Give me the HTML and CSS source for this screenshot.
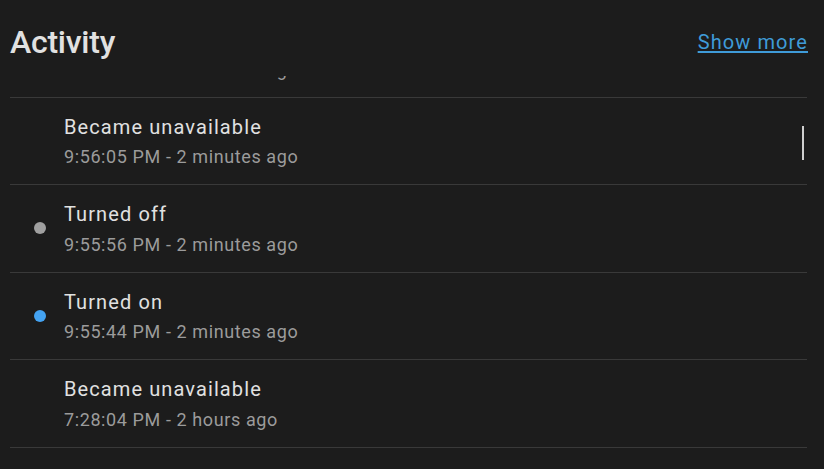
FILE: index.html
```html
<!DOCTYPE html>
<html lang="en">
<head>
<meta charset="utf-8">
<title>Activity</title>
<link rel="stylesheet" href="styles.css">
</head>
<body>
<div class="card">
  <div class="header">
    <h1 class="title">Activity</h1>
    <a class="more" href="#">Show more</a>
  </div>
  <div class="scroller">
    <ul class="list">
      <li class="entry">
        <span class="dot none"></span>
        <div class="text">
          <div class="primary">Turned off</div>
          <div class="secondary">9:56:17 PM - 2 minutes ago</div>
        </div>
      </li>
      <li class="entry">
        <span class="dot none"></span>
        <div class="text">
          <div class="primary">Became unavailable</div>
          <div class="secondary">9:56:05 PM - 2 minutes ago</div>
        </div>
      </li>
      <li class="entry">
        <span class="dot off"></span>
        <div class="text">
          <div class="primary">Turned off</div>
          <div class="secondary">9:55:56 PM - 2 minutes ago</div>
        </div>
      </li>
      <li class="entry">
        <span class="dot on"></span>
        <div class="text">
          <div class="primary">Turned on</div>
          <div class="secondary">9:55:44 PM - 2 minutes ago</div>
        </div>
      </li>
      <li class="entry">
        <span class="dot none"></span>
        <div class="text">
          <div class="primary">Became unavailable</div>
          <div class="secondary">7:28:04 PM - 2 hours ago</div>
        </div>
      </li>
    </ul>
    <div class="thumb"></div>
  </div>
</div>
</body>
</html>
```
FILE: styles.css
```css
html, body {
  margin: 0;
  padding: 0;
  height: 100%;
  background: #1c1c1c;
}
body {
  font-family: Roboto, "Noto Sans", sans-serif;
  color: #e1e1e1;
  overflow: hidden;
}
.card {
  height: 469px;
  display: flex;
  flex-direction: column;
  padding: 0 17px 0 10px;
  box-sizing: border-box;
}
.header {
  display: flex;
  align-items: center;
  justify-content: space-between;
  padding: 22px 0 14px;
}
.title {
  margin: 0;
  font-size: 32px;
  line-height: 40px;
  font-weight: 500;
  letter-spacing: -0.25px;
  color: #e1e1e1;
}
.more {
  font-size: 20px;
  line-height: 24px;
  letter-spacing: 1.1px;
  margin-right: -1px;
  color: #3f9bd8;
  text-decoration: underline;
  text-underline-offset: 2px;
}
.scroller {
  position: relative;
  flex: 1;
  overflow: hidden;
}
.list {
  list-style: none;
  margin: -66px 0 0;
  padding: 0;
}
.entry {
  display: flex;
  align-items: center;
  gap: 18px;
  padding: 15px 0 15px 24px;
  border-bottom: 1px solid #393939;
}
.dot {
  width: 12px;
  height: 12px;
  border-radius: 50%;
  flex: none;
}
.dot.none { background: transparent; }
.dot.off { background: #a0a0a0; }
.dot.on { background: #44a3f2; }
.primary {
  font-size: 20px;
  line-height: 28px;
  letter-spacing: 1.1px;
  color: #e1e1e1;
}
.secondary {
  margin-top: 4.5px;
  font-size: 18px;
  line-height: 24px;
  letter-spacing: 0.6px;
  color: #9b9b9b;
}
.thumb {
  position: absolute;
  right: 3px;
  top: 50px;
  width: 2px;
  height: 34px;
  background: #cfcfcf;
}
```
